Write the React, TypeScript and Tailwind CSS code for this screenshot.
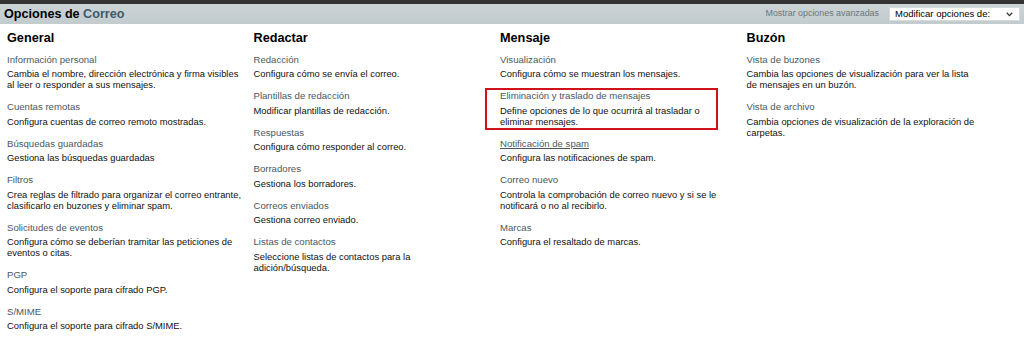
import React from "react";

type Item = { t: string; d: string; u?: boolean; box?: boolean };
type Col = { h: string; items: Item[] };

const cols: Col[] = [
  {
    h: "General",
    items: [
      { t: "Información personal", d: "Cambia el nombre, dirección electrónica y firma visibles al leer o responder a sus mensajes." },
      { t: "Cuentas remotas", d: "Configura cuentas de correo remoto mostradas." },
      { t: "Búsquedas guardadas", d: "Gestiona las búsquedas guardadas" },
      { t: "Filtros", d: "Crea reglas de filtrado para organizar el correo entrante, clasificarlo en buzones y eliminar spam." },
      { t: "Solicitudes de eventos", d: "Configura cómo se deberían tramitar las peticiones de eventos o citas." },
      { t: "PGP", d: "Configura el soporte para cifrado PGP." },
      { t: "S/MIME", d: "Configura el soporte para cifrado S/MIME." },
    ],
  },
  {
    h: "Redactar",
    items: [
      { t: "Redacción", d: "Configura cómo se envía el correo." },
      { t: "Plantillas de redacción", d: "Modificar plantillas de redacción." },
      { t: "Respuestas", d: "Configura cómo responder al correo." },
      { t: "Borradores", d: "Gestiona los borradores." },
      { t: "Correos enviados", d: "Gestiona correo enviado." },
      { t: "Listas de contactos", d: "Seleccione listas de contactos para la adición/búsqueda." },
    ],
  },
  {
    h: "Mensaje",
    items: [
      { t: "Visualización", d: "Configura cómo se muestran los mensajes." },
      { t: "Eliminación y traslado de mensajes", d: "Define opciones de lo que ocurrirá al trasladar o eliminar mensajes.", box: true },
      { t: "Notificación de spam", d: "Configura las notificaciones de spam.", u: true },
      { t: "Correo nuevo", d: "Controla la comprobación de correo nuevo y si se le notificará o no al recibirlo." },
      { t: "Marcas", d: "Configura el resaltado de marcas." },
    ],
  },
  {
    h: "Buzón",
    items: [
      { t: "Vista de buzones", d: "Cambia las opciones de visualización para ver la lista de mensajes en un buzón." },
      { t: "Vista de archivo", d: "Cambia opciones de visualización de la exploración de carpetas." },
    ],
  },
];

export default function App() {
  return (
    <div className="w-[1024px] h-[339px] overflow-hidden bg-white font-['Liberation_Sans',Arial,sans-serif] text-black">
      <div className="h-[4px] bg-[#333333]" />
      <div className="h-[20px] bg-gradient-to-b from-[#cbd3d5] to-[#c2cbce] flex items-center justify-between pl-[4px] pr-[4px]">
        <h1 className="text-[12.6px] leading-[15px] font-bold">
          Opciones de <span className="text-[#3f5a68]">Correo</span>
        </h1>
        <div className="flex items-center gap-[10px]">
          <span className="text-[8.9px] text-[#6e777c]">Mostrar opciones avanzadas</span>
          <div className="w-[131px] h-[14px] bg-white border border-[#d6dadb] flex items-center justify-between pl-[5px] pr-[6px] text-[9.5px] leading-[12px]">
            <span>Modificar opciones de:</span>
            <svg width="7" height="5" viewBox="0 0 7 5" className="text-[#333]">
              <polyline points="0.8,0.8 3.5,3.6 6.2,0.8" fill="none" stroke="currentColor" strokeWidth="1.3" />
            </svg>
          </div>
        </div>
      </div>
      <div className="flex pl-[7px] pt-[7px]">
        {cols.map((c) => (
          <div key={c.h} className="w-[246.5px] shrink-0">
            <h2 className="text-[12.7px] leading-[15px] font-bold mb-[7.5px]">{c.h}</h2>
            {c.items.map((it) => (
              <div key={it.t} className="relative mb-[11px] w-[235px]">
                {it.box && (
                  <div className="absolute left-[-15.5px] top-[-2.5px] w-[233px] h-[42px] border-2 border-[#d0121b] pointer-events-none" />
                )}
                <div
                  className={
                    "text-[9.6px] leading-[12px] mb-[2.5px] text-[#4a5960] " +
                    (it.u ? "underline decoration-[#4a5960]" : "")
                  }
                >
                  {it.t}
                </div>
                <div className="text-[9.4px] leading-[11px] text-[#111111]">{it.d}</div>
              </div>
            ))}
          </div>
        ))}
      </div>
    </div>
  );
}
